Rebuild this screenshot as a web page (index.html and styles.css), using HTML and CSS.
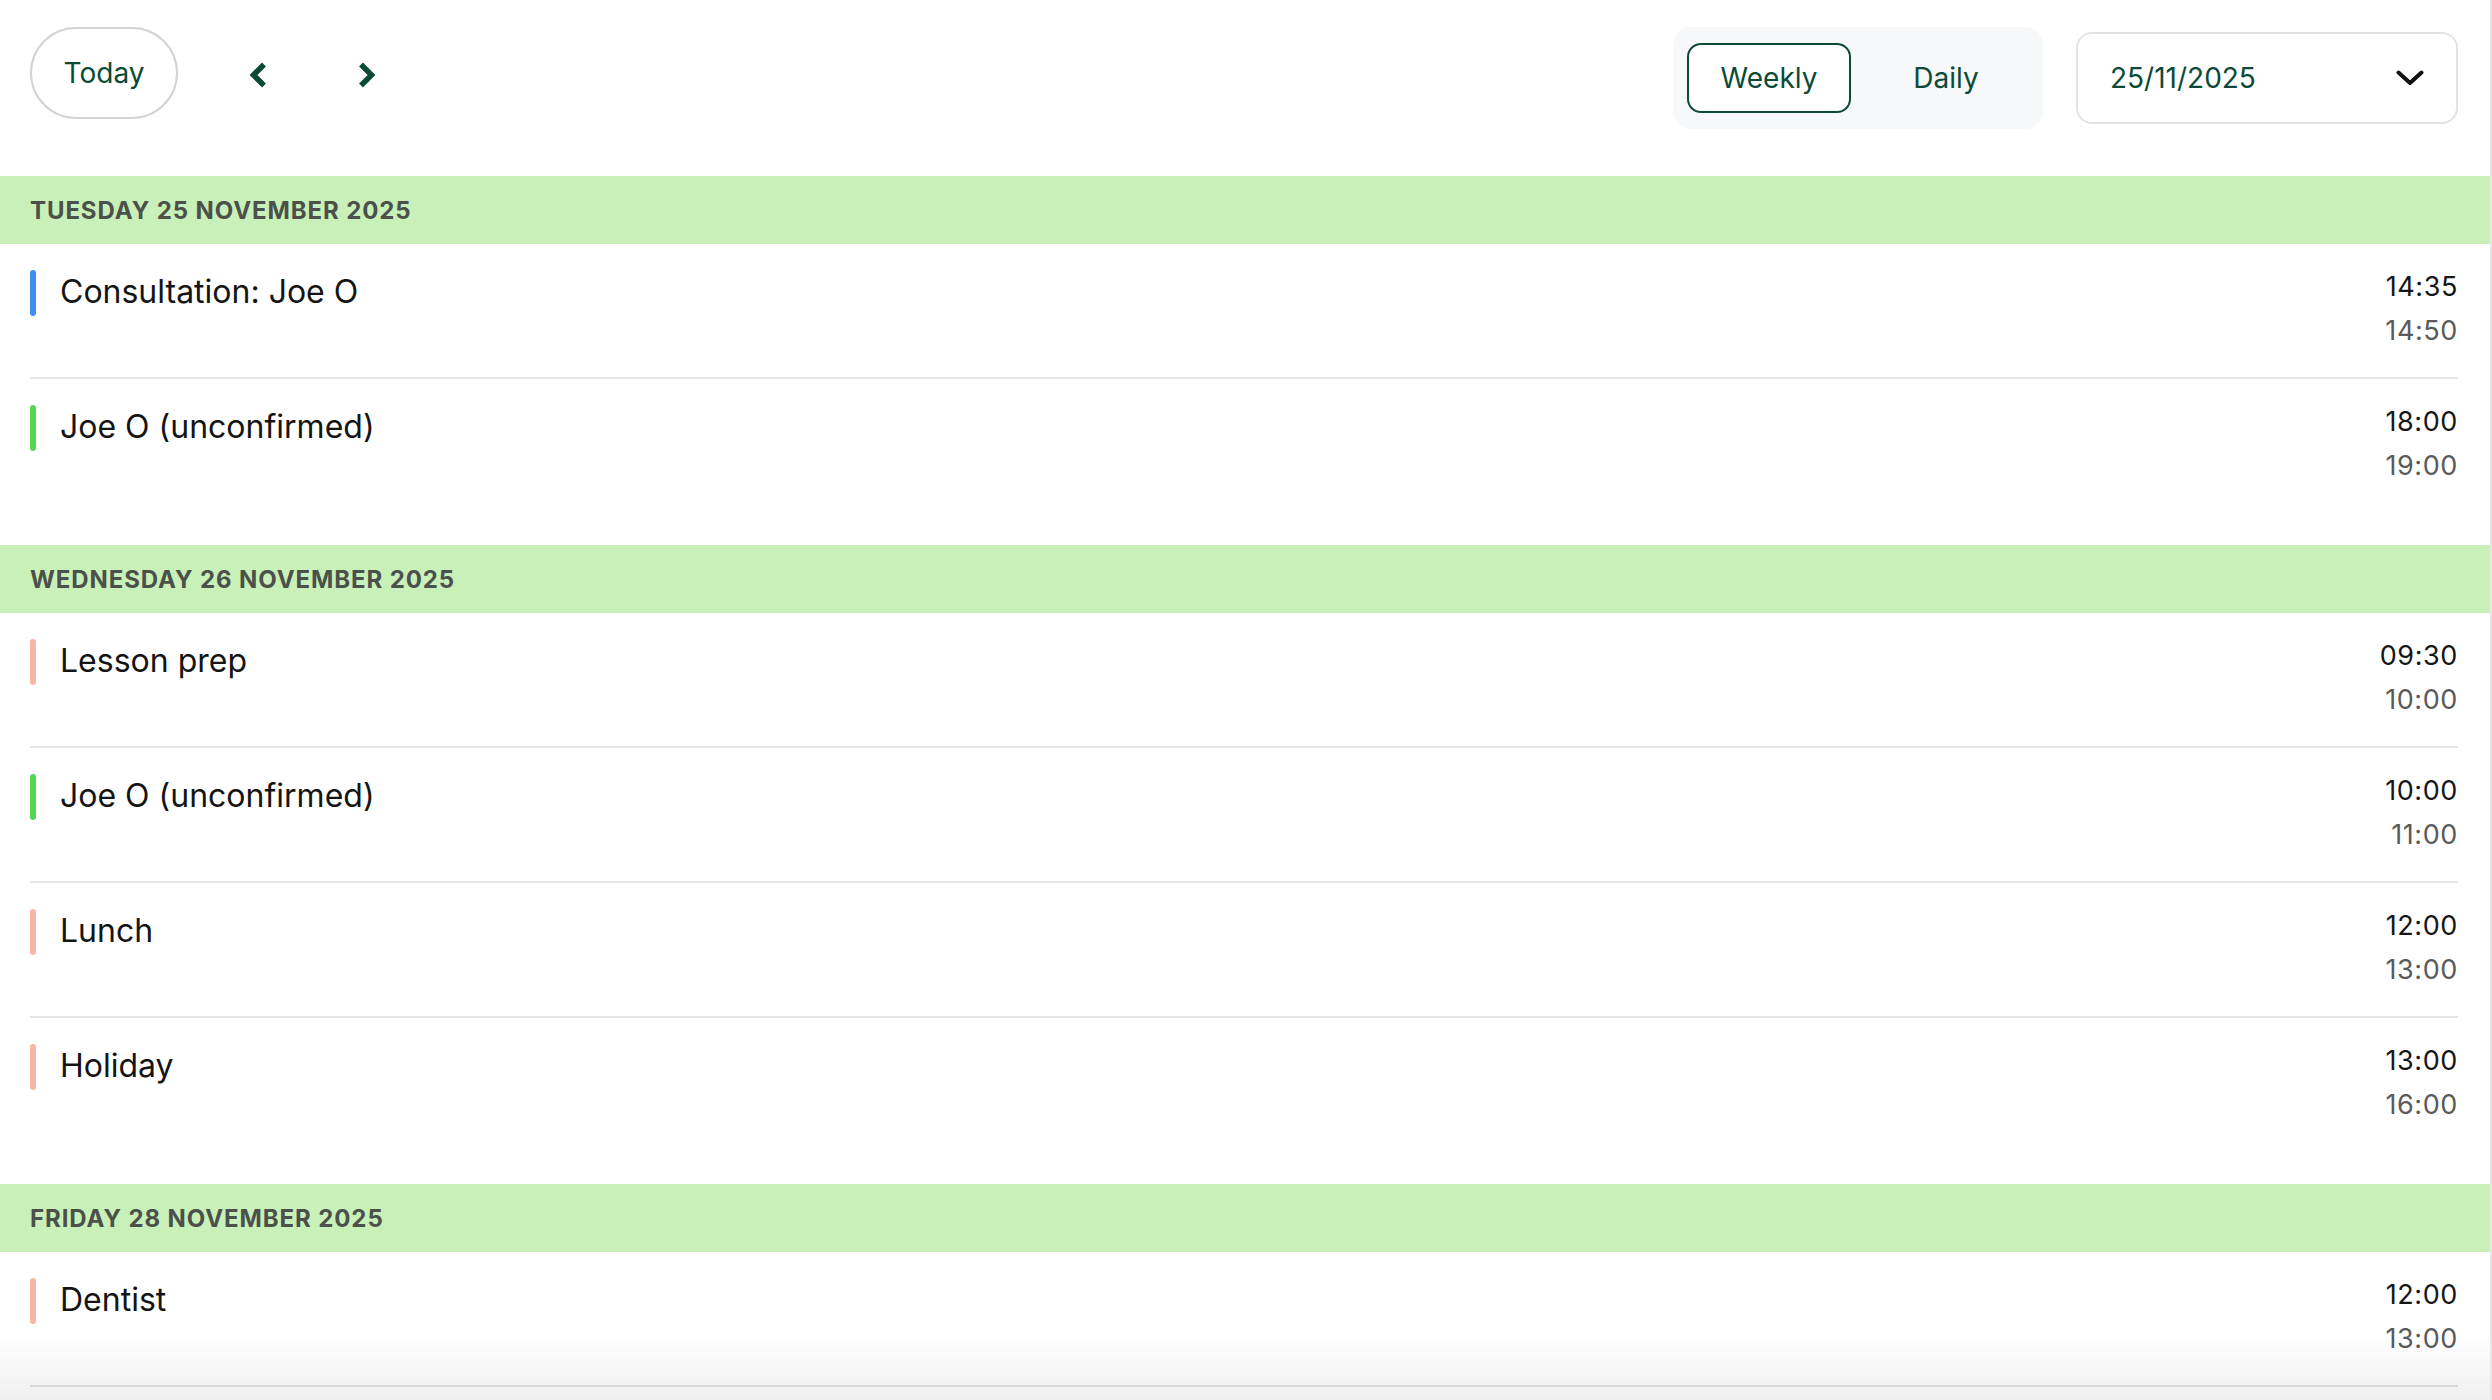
FILE: index.html
```html
<!DOCTYPE html>
<html lang="en">
<head>
<meta charset="utf-8">
<title>Schedule</title>
<link rel="stylesheet" href="styles.css">
</head>
<body>
<div class="app">
  <header class="toolbar">
    <button class="today-btn">Today</button>
    <button class="nav-btn" aria-label="Previous">
      <svg width="20" height="28" viewBox="0 0 20 28"><path d="M16 3.5 L5.5 14 L16 24.5" fill="none" stroke="#0b4a37" stroke-width="5.5"/></svg>
    </button>
    <button class="nav-btn" aria-label="Next">
      <svg width="20" height="28" viewBox="0 0 20 28"><path d="M4 3.5 L14.5 14 L4 24.5" fill="none" stroke="#0b4a37" stroke-width="5.5"/></svg>
    </button>
    <div class="spacer"></div>
    <div class="segmented">
      <button class="seg-btn active">Weekly</button>
      <button class="seg-btn daily">Daily</button>
    </div>
    <div class="date-select">
      <span class="date-value">25/11/2025</span>
      <svg width="28" height="16" viewBox="0 0 28 16"><path d="M2.5 2.5 L14 13 L25.5 2.5" fill="none" stroke="#111" stroke-width="4" stroke-linecap="round" stroke-linejoin="round"/></svg>
    </div>
  </header>

  <main class="agenda">
    <section class="day">
      <h2 class="day-title">Tuesday 25 November 2025</h2>
      <div class="event">
        <span class="bar bar-blue"></span>
        <span class="event-title">Consultation: Joe O</span>
        <div class="times"><span class="start">14:35</span><span class="end">14:50</span></div>
      </div>
      <div class="event">
        <span class="bar bar-green"></span>
        <span class="event-title">Joe O (unconfirmed)</span>
        <div class="times"><span class="start">18:00</span><span class="end">19:00</span></div>
      </div>
    </section>

    <section class="day">
      <h2 class="day-title">Wednesday 26 November 2025</h2>
      <div class="event">
        <span class="bar bar-salmon"></span>
        <span class="event-title">Lesson prep</span>
        <div class="times"><span class="start">09:30</span><span class="end">10:00</span></div>
      </div>
      <div class="event">
        <span class="bar bar-green"></span>
        <span class="event-title">Joe O (unconfirmed)</span>
        <div class="times"><span class="start">10:00</span><span class="end">11:00</span></div>
      </div>
      <div class="event">
        <span class="bar bar-salmon"></span>
        <span class="event-title">Lunch</span>
        <div class="times"><span class="start">12:00</span><span class="end">13:00</span></div>
      </div>
      <div class="event">
        <span class="bar bar-salmon"></span>
        <span class="event-title">Holiday</span>
        <div class="times"><span class="start">13:00</span><span class="end">16:00</span></div>
      </div>
    </section>

    <section class="day">
      <h2 class="day-title">Friday 28 November 2025</h2>
      <div class="event event-continued">
        <span class="bar bar-salmon"></span>
        <span class="event-title">Dentist</span>
        <div class="times"><span class="start">12:00</span><span class="end">13:00</span></div>
      </div>
    </section>
  </main>
  <div class="bottom-fade"></div>
</div>
</body>
</html>
```

FILE: styles.css
```css
html, body {
  margin: 0;
  padding: 0;
  height: 100%;
  overflow: hidden;
}

body {
  background: #e7e7e7;
  font-family: Inter, "Noto Sans", "Liberation Sans", sans-serif;
  color: #161616;
}

.app {
  margin-right: 2px;
  min-height: 100%;
  background: #ffffff;
}

button {
  font-family: inherit;
  background: none;
  border: none;
  padding: 0;
  cursor: pointer;
}

/* top toolbar */
.toolbar {
  height: 176px;
  box-sizing: border-box;
  display: flex;
  align-items: flex-start;
  padding: 27px 32px 0 30px;
}

.today-btn {
  width: 148px;
  height: 92px;
  border: 2px solid #d3d3d3;
  border-radius: 46px;
  font-size: 28px;
  color: #0b4a37;
  background: #fff;
}

.nav-btn {
  width: 60px;
  height: 60px;
  margin-top: 18px;
  display: flex;
  align-items: center;
  justify-content: center;
}

.today-btn + .nav-btn {
  margin-left: 50px;
}

.nav-btn + .nav-btn {
  margin-left: 49px;
}

.spacer {
  flex: 1;
}

.segmented {
  display: flex;
  gap: 10px;
  padding: 16px 12px 16px 14px;
  background: #f6f8f9;
  border-radius: 18px;
}

.seg-btn {
  height: 70px;
  border-radius: 14px;
  font-size: 28px;
  color: #0b4a37;
  border: 2px solid transparent;
}

.seg-btn.active {
  width: 164px;
  border-color: #0b4a37;
  background: #fff;
}

.seg-btn.daily {
  width: 170px;
}

.date-select {
  margin-left: 33px;
  margin-top: 5px;
  width: 382px;
  height: 92px;
  box-sizing: border-box;
  border: 2px solid #e3e3e3;
  border-radius: 16px;
  display: flex;
  align-items: center;
  justify-content: space-between;
  padding: 0 32px 0 32px;
}

.date-value {
  font-size: 28px;
  color: #0b4a37;
}

/* agenda list */
.agenda {
  display: flex;
  flex-direction: column;
  gap: 33px;
}

.day-title {
  margin: 0;
  height: 68px;
  box-sizing: border-box;
  padding-left: 30px;
  display: flex;
  align-items: center;
  background: #c8f0b8;
  font-size: 24px;
  font-weight: 700;
  letter-spacing: 0.9px;
  text-transform: uppercase;
  color: #4b504a;
}

.event {
  display: flex;
  align-items: flex-start;
  margin: 0 32px 0 30px;
  padding: 21px 0 24px;
  border-bottom: 2px solid #e6e6e6;
}

.day .event:last-child {
  border-bottom: none;
  padding-bottom: 24px;
}

.day .event.event-continued {
  border-bottom: 2px solid #e2e2e2;
  padding-bottom: 24px;
}

.bar {
  width: 6px;
  height: 46px;
  border-radius: 3px;
  margin-top: 5px;
  flex-shrink: 0;
}

.bar-blue { background: #3d8ff2; }
.bar-green { background: #53d655; }
.bar-salmon { background: #f8b4a6; }

.event-title {
  flex: 1;
  margin-left: 24px;
  margin-top: 4px;
  font-size: 32px;
  line-height: 46px;
  color: #141414;
}

.times {
  display: flex;
  flex-direction: column;
  align-items: flex-end;
  font-size: 27px;
  letter-spacing: 0.6px;
  line-height: 44px;
}

.times .start { color: #161616; }
.times .end { color: #5a5a5a; }

.bottom-fade {
  position: fixed;
  left: 0;
  right: 2px;
  bottom: 0;
  height: 64px;
  pointer-events: none;
  background: linear-gradient(to bottom, rgba(0, 0, 0, 0), rgba(0, 0, 0, 0.06));
}
```
